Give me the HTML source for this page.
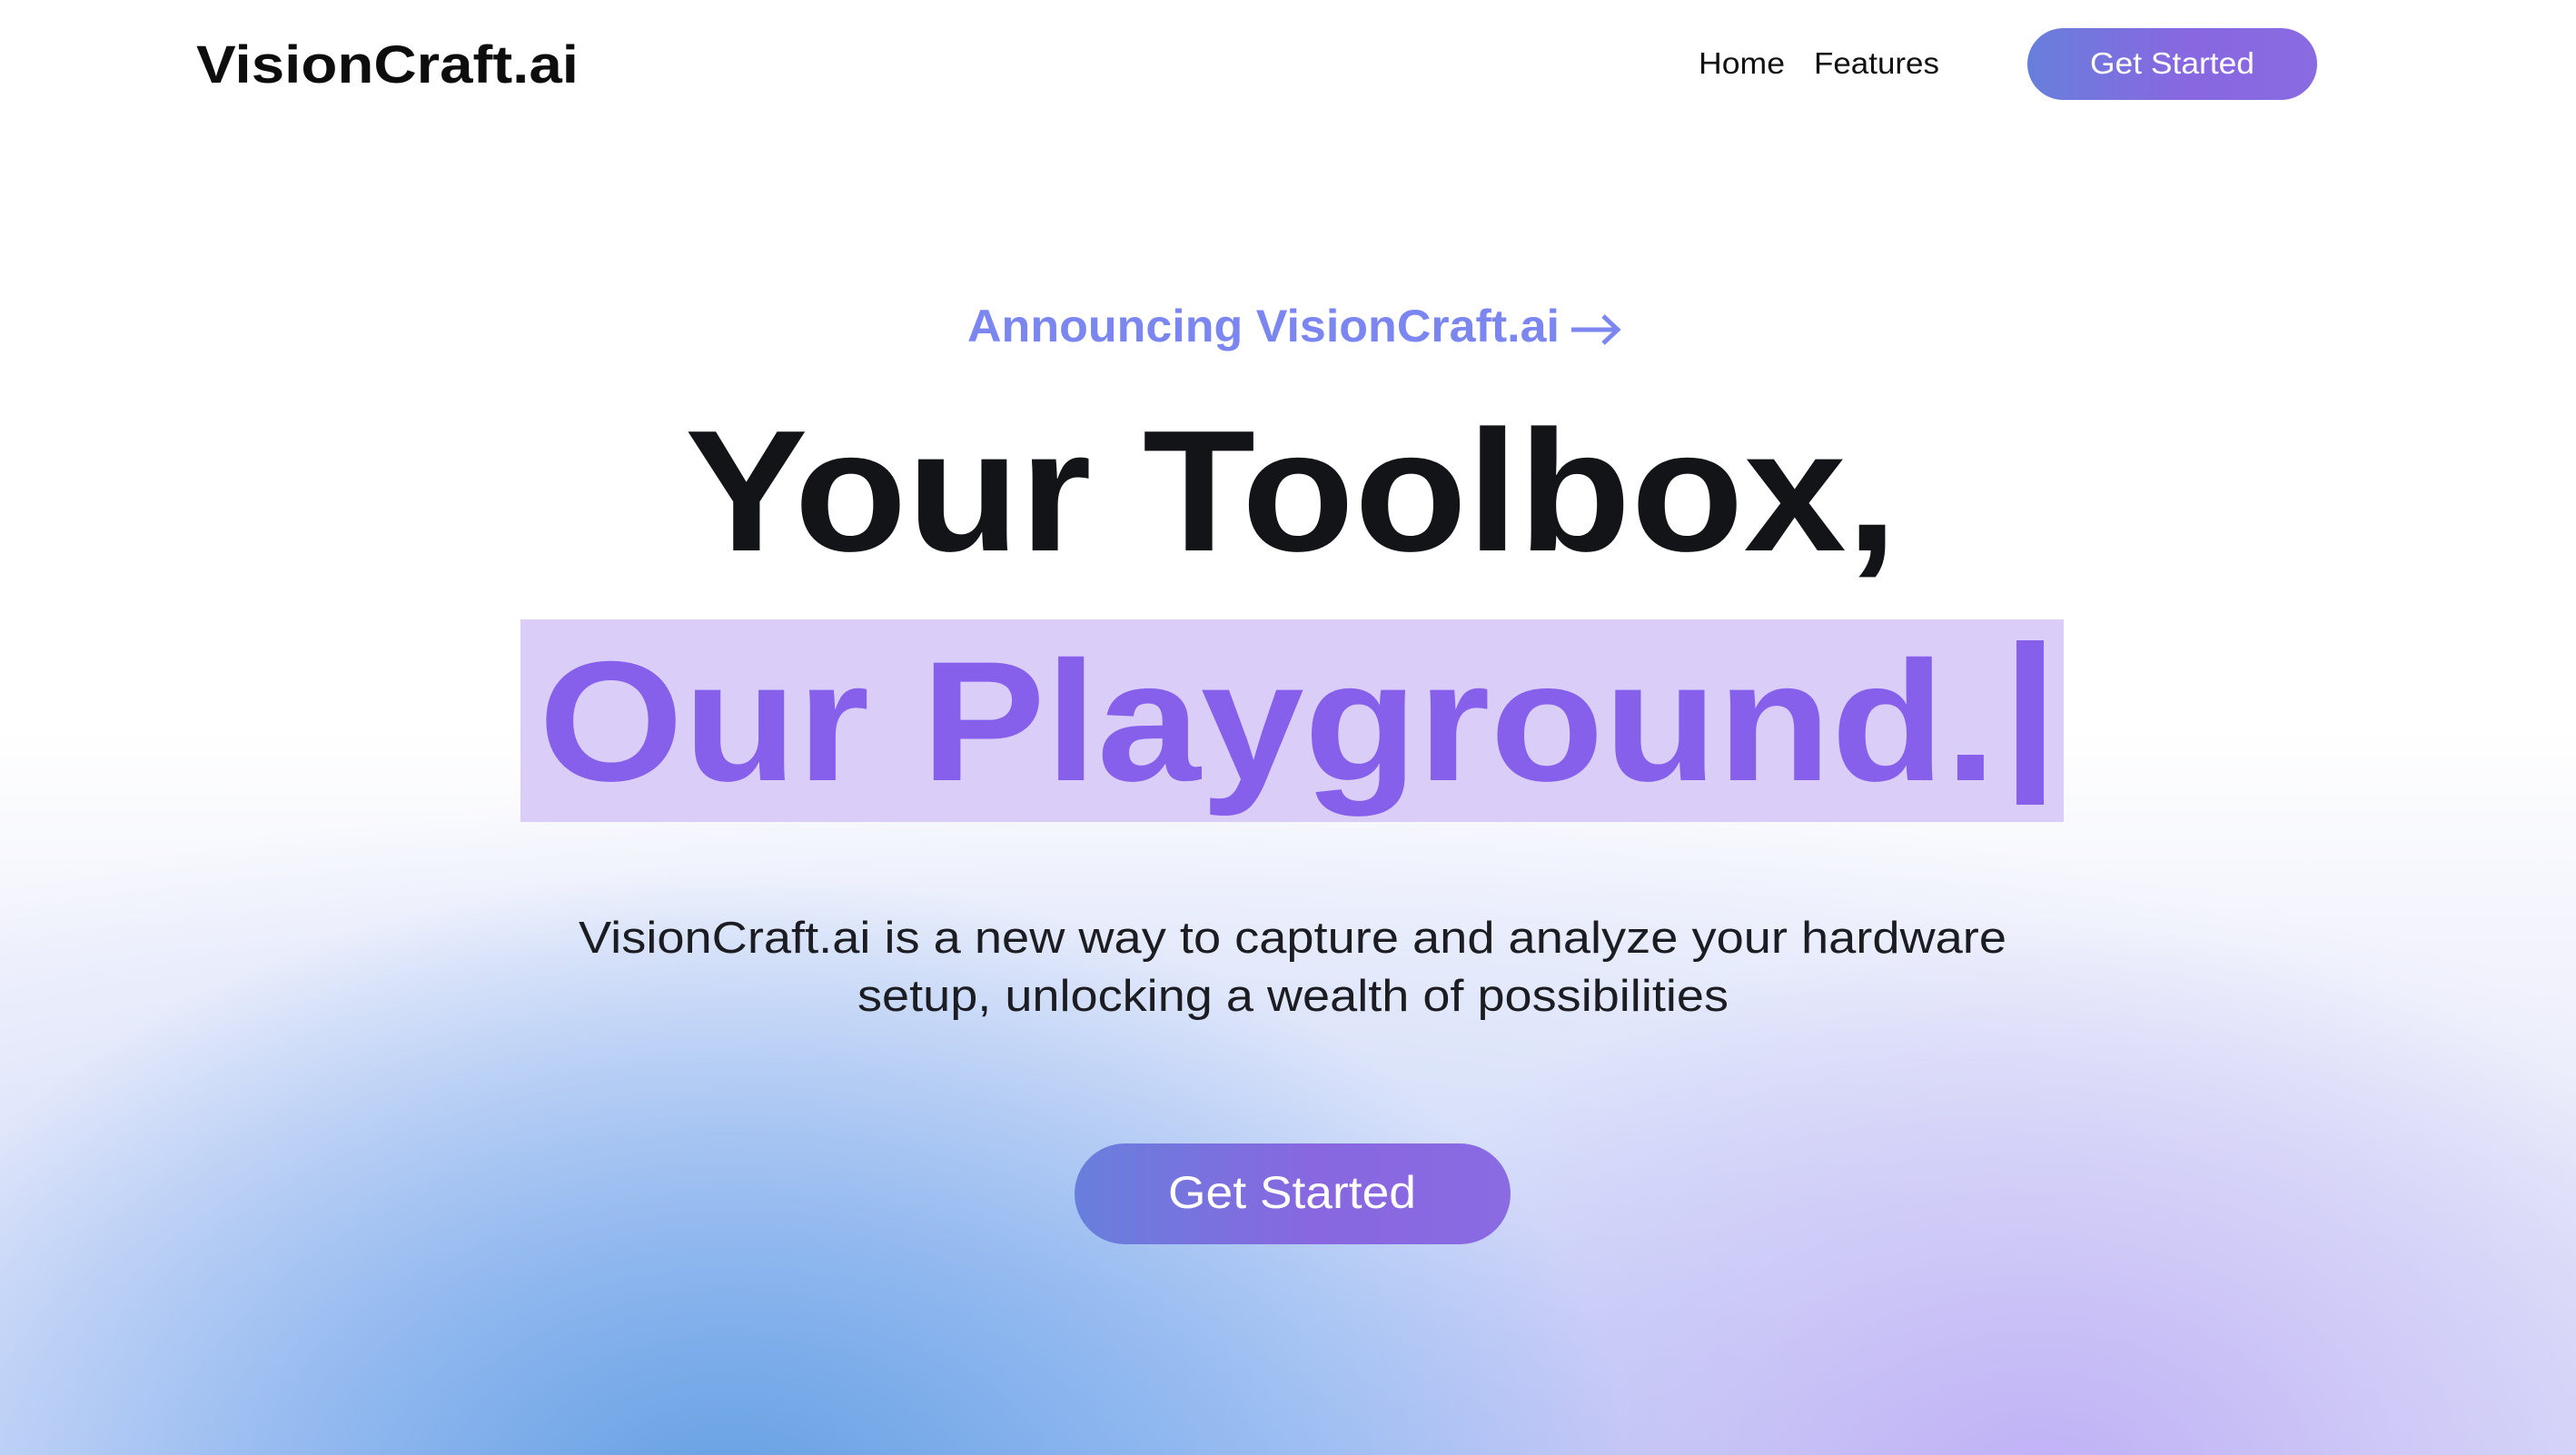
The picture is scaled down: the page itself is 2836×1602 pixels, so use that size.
<!DOCTYPE html>
<html><head><meta charset="utf-8"><style>
html,body{margin:0;padding:0;width:2836px;height:1602px;overflow:hidden;background:#fff}
.bg{position:absolute;left:0;top:0;width:2836px;height:1602px;
background:
radial-gradient(ellipse 1000px 700px at 800px 1660px, rgba(100,160,226,1) 0%, rgba(120,170,235,0.75) 40%, rgba(160,195,245,0) 100%),
radial-gradient(ellipse 850px 620px at 2250px 1640px, rgba(192,176,246,1) 0%, rgba(200,185,245,0.6) 45%, rgba(220,210,250,0) 100%),
radial-gradient(ellipse 2400px 900px at 1200px 1750px, rgba(170,198,246,1) 0%, rgba(205,218,250,0.8) 50%, rgba(240,242,252,0) 100%),
linear-gradient(180deg,#fff 0px,#fff 800px,#f2f3fc 1050px,#e6e6f8 1602px);}
svg{position:absolute;left:0;top:0}
text{font-family:"Liberation Sans",sans-serif}
</style></head><body>
<div class="bg"></div>
<svg width="2836" height="1602" viewBox="0 0 2836 1602">
<defs>
<linearGradient id="g" x1="0" x2="1" y1="0" y2="0"><stop offset="0" stop-color="#687fdc"/><stop offset="0.55" stop-color="#8867e0"/><stop offset="1" stop-color="#8a6be2"/></linearGradient>
</defs>
<text x="216" y="91" font-size="58" font-weight="bold" fill="#0d0d0d" textLength="421" lengthAdjust="spacingAndGlyphs">VisionCraft.ai</text>
<text x="1870" y="81" font-size="33" fill="#111" textLength="95" lengthAdjust="spacingAndGlyphs">Home</text>
<text x="1997" y="81" font-size="33" fill="#111" textLength="138" lengthAdjust="spacingAndGlyphs">Features</text>
<rect x="2232" y="31" width="319" height="79" rx="39.5" fill="url(#g)"/>
<text x="2301" y="81" font-size="33" fill="#fff" textLength="181" lengthAdjust="spacingAndGlyphs">Get Started</text>

<text x="1065" y="376" font-size="50" font-weight="bold" fill="#7b86f0" textLength="652" lengthAdjust="spacingAndGlyphs">Announcing VisionCraft.ai</text>
<path d="M1730 363 H1780 M1765 348 L1781 363 L1765 378" stroke="#7b86f0" stroke-width="5" fill="none"/>

<text x="754" y="606" font-size="190" font-weight="bold" fill="#121417" textLength="1335" lengthAdjust="spacingAndGlyphs">Your Toolbox,</text>

<rect x="573" y="682" width="1699" height="223" fill="#dacdf8"/>
<text x="593" y="859" font-size="188" font-weight="bold" fill="#8660ea" textLength="1605" lengthAdjust="spacingAndGlyphs">Our Playground.</text>
<rect x="2220" y="705" width="30" height="181" fill="#8660ea"/>

<text x="637" y="1049" font-size="49" fill="#1c1d22" textLength="1572" lengthAdjust="spacingAndGlyphs">VisionCraft.ai is a new way to capture and analyze your hardware</text>
<text x="944" y="1113" font-size="49" fill="#1c1d22" textLength="959" lengthAdjust="spacingAndGlyphs">setup, unlocking a wealth of possibilities</text>

<rect x="1183" y="1259" width="480" height="111" rx="55.5" fill="url(#g)"/>
<text x="1286" y="1330" font-size="50" fill="#fff" textLength="273" lengthAdjust="spacingAndGlyphs">Get Started</text>
</svg>
</body></html>
